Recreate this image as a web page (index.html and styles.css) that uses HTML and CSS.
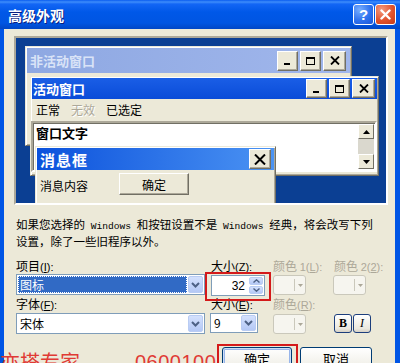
FILE: index.html
```html
<!DOCTYPE html>
<html lang="zh-CN">
<head>
<meta charset="utf-8">
<title>高级外观</title>
<link rel="stylesheet" href="styles.css">
</head>
<body>
<div class="win">
  <div class="titlebar">
    <span class="title">高级外观</span>
    <div class="tbtns">
      <span class="tb help">?</span>
      <span class="tb close"><svg width="11" height="11" viewBox="0 0 11 11"><path d="M1.5 1.5l8 8M9.5 1.5l-8 8" stroke="#fff" stroke-width="2.4" stroke-linecap="round"/></svg></span>
    </div>
  </div>
  <div class="frame">
    <div class="body">
      <div class="preview">
        <div class="pw inactive">
          <div class="ptitle">
            <span class="ptext">非活动窗口</span>
            <div class="pbtns">
              <span class="pb"><svg width="10" height="10" viewBox="0 0 10 10"><rect x="1" y="7" width="6" height="2" fill="#000"/></svg></span>
              <span class="pb"><svg width="11" height="10" viewBox="0 0 11 10"><rect x="1.5" y="1.5" width="8" height="7" fill="none" stroke="#000"/><rect x="1" y="1" width="9" height="2" fill="#000"/></svg></span>
              <span class="pb wide"><svg width="10" height="9" viewBox="0 0 10 9"><path d="M1 0.5l8 8M9 0.5l-8 8" stroke="#000" stroke-width="1.8"/></svg></span>
            </div>
          </div>
        </div>
        <div class="pw active">
          <div class="ptitle">
            <span class="ptext">活动窗口</span>
            <div class="pbtns">
              <span class="pb"><svg width="10" height="10" viewBox="0 0 10 10"><rect x="1" y="7" width="6" height="2" fill="#000"/></svg></span>
              <span class="pb"><svg width="11" height="10" viewBox="0 0 11 10"><rect x="1.5" y="1.5" width="8" height="7" fill="none" stroke="#000"/><rect x="1" y="1" width="9" height="2" fill="#000"/></svg></span>
              <span class="pb wide"><svg width="10" height="9" viewBox="0 0 10 9"><path d="M1 0.5l8 8M9 0.5l-8 8" stroke="#000" stroke-width="1.8"/></svg></span>
            </div>
          </div>
          <div class="menubar">
            <span>正常</span><span class="dis">无效</span><span>已选定</span>
          </div>
          <div class="textarea">
            <span class="wtext">窗口文字</span>
            <div class="sbar">
              <span class="sbtn"><svg width="7" height="4" viewBox="0 0 7 4"><path d="M3.5 0L7 4H0z" fill="#000"/></svg></span>
              <span class="strack"></span>
              <span class="sbtn"><svg width="7" height="4" viewBox="0 0 7 4"><path d="M0 0h7L3.5 4z" fill="#000"/></svg></span>
            </div>
          </div>
        </div>
        <div class="pw msg">
          <div class="ptitle">
            <span class="ptext">消息框</span>
            <span class="pb wide"><svg width="12" height="11" viewBox="0 0 12 11"><path d="M1 0.5l10 10M11 0.5l-10 10" stroke="#000" stroke-width="2"/></svg></span>
          </div>
          <div class="msgbody">
            <span>消息内容</span>
            <span class="mbtn">确定</span>
          </div>
        </div>
      </div>

      <p class="note">如果您选择的<span class="lat"> Windows </span>和按钮设置不是<span class="lat"> Windows </span>经典，将会改写下列<br>设置，除了一些旧程序以外。</p>

      <div class="form">
        <span class="lbl">项目<span class="acc">(<u>I</u>):</span></span>
        <span class="lbl">大小<span class="acc">(<u>Z</u>):</span></span>
        <span class="lbl dis">颜色 <span class="acc">1(<u>L</u>):</span></span>
        <span class="lbl dis">颜色 <span class="acc">2(<u>2</u>):</span></span>

        <div class="combo">
          <span class="val sel">图标</span>
          <span class="dd"><svg width="9" height="6" viewBox="0 0 9 6"><path d="M1 1l3.5 3.5L8 1" fill="none" stroke="#4D6185" stroke-width="2"/></svg></span>
        </div>
        <div class="spin hl">
          <span class="val num">32</span>
          <span class="spinbtns">
            <span class="sp"><svg width="7" height="4" viewBox="0 0 7 4"><path d="M0.5 3.5L3.5 0.8 6.5 3.5" fill="none" stroke="#4D6185" stroke-width="1.4"/></svg></span>
            <span class="sp"><svg width="7" height="4" viewBox="0 0 7 4"><path d="M0.5 0.5L3.5 3.2 6.5 0.5" fill="none" stroke="#4D6185" stroke-width="1.4"/></svg></span>
          </span>
        </div>
        <div class="cbtn"><span class="sw"></span><span class="cdd"><svg width="5" height="3" viewBox="0 0 5 3"><path d="M0 0h5L2.5 3z" fill="#ACA899"/></svg></span></div>
        <div class="cbtn c2"><span class="sw"></span><span class="cdd"><svg width="5" height="3" viewBox="0 0 5 3"><path d="M0 0h5L2.5 3z" fill="#ACA899"/></svg></span></div>

        <span class="lbl">字体<span class="acc">(<u>F</u>):</span></span>
        <span class="lbl">大小<span class="acc">(<u>E</u>):</span></span>
        <span class="lbl dis">颜色<span class="acc">(<u>R</u>):</span></span>
        <span></span>

        <div class="combo">
          <span class="val">宋体</span>
          <span class="dd"><svg width="9" height="6" viewBox="0 0 9 6"><path d="M1 1l3.5 3.5L8 1" fill="none" stroke="#4D6185" stroke-width="2"/></svg></span>
        </div>
        <div class="combo small">
          <span class="val">9</span>
          <span class="dd"><svg width="9" height="6" viewBox="0 0 9 6"><path d="M1 1l3.5 3.5L8 1" fill="none" stroke="#4D6185" stroke-width="2"/></svg></span>
        </div>
        <div class="cbtn"><span class="sw"></span><span class="cdd"><svg width="5" height="3" viewBox="0 0 5 3"><path d="M0 0h5L2.5 3z" fill="#ACA899"/></svg></span></div>
        <div class="fmt">
          <span class="fb bold">B</span>
          <span class="fb ital">I</span>
        </div>
      </div>

      <div class="footer">
        <span class="btn def hl2">确定</span>
        <span class="btn">取消</span>
      </div>
    </div>
  </div>
  <div class="watermark"><span>亦搭专家</span><span class="wm2">0600100</span></div>
</div>
</body>
</html>
```

FILE: styles.css
```css
* { box-sizing: border-box; margin: 0; padding: 0; }
html, body { width: 400px; height: 363px; overflow: hidden; }
body {
  font-family: "Noto Sans CJK SC", "Noto Sans", sans-serif;
  font-size: 12px;
  color: #000;
  background: #ECE9D8;
}
.win {
  position: relative;
  width: 400px;
  height: 363px;
  display: flex;
  flex-direction: column;
  overflow: hidden;
}
.titlebar {
  flex: none;
  height: 29px;
  display: flex;
  align-items: center;
  justify-content: space-between;
  padding: 0 4px 0 8px;
  background: linear-gradient(#0A5CF0 0, #3E8DFB 2px, #1366F5 4px, #0058E8 12px, #0055E2 23px, #0046C6 29px);
}
.title {
  color: #fff;
  font-weight: bold;
  font-size: 14px;
  letter-spacing: 0;
  text-shadow: 1px 1px #0A1F80;
}
.tbtns { display: flex; gap: 1px; }
.tb {
  width: 21px;
  height: 21px;
  border: 1px solid #fff;
  border-radius: 3px;
  display: flex;
  align-items: center;
  justify-content: center;
  color: #fff;
  font: bold 15px "Liberation Sans", sans-serif;
}
.help { background: radial-gradient(circle at 30% 25%, #78AEFF 0, #2F72EE 55%, #1B56D8 100%); }
.close { background: radial-gradient(circle at 30% 25%, #F49A7E 0, #E1532E 55%, #C63A16 100%); }

.frame {
  flex: 1;
  display: flex;
  background: #0055E5;
  padding: 0 5px 0 4px;
}
.body {
  flex: 1;
  background: #ECE9D8;
  position: relative;
}

/* preview canvas */
.preview {
  position: relative;
  margin: 7px 0 0 10px;
  width: 374px;
  height: 169px;
  border: 2px solid;
  border-color: #ACA899 #fff #fff #ACA899;
  background: #0B3F93;
  overflow: hidden;
}
.pw {
  position: absolute;
  background: #ECE9D8;
  border: 1px solid;
  border-color: #ECE9D8 #716F64 #716F64 #ECE9D8;
  padding: 1px;
  box-shadow: inset 1px 1px #fff, inset -1px -1px #ACA899;
  display: flex;
  flex-direction: column;
}
.inactive { left: 9px; top: 8px; width: 327px; height: 100px; }
.active { left: 14px; top: 38px; width: 349px; height: 100px; }
.msg { left: 19px; top: 108px; width: 241px; height: 70px; }

.ptitle {
  flex: none;
  display: flex;
  align-items: center;
  justify-content: space-between;
  color: #fff;
  font-weight: bold;
  font-size: 13px;
}
.inactive .ptitle {
  height: 25px;
  padding: 0 4px 0 3px;
  background: linear-gradient(90deg, #8EA8E2, #A1B7EC);
  color: #D9E3F7;
}
.active .ptitle {
  height: 21px;
  padding: 0 2px 0 1px;
  background: linear-gradient(#1A5EE6, #0A4CD8);
}
.msg .ptitle {
  height: 22px;
  padding: 0 3px 0 3px;
  background: linear-gradient(90deg, #0C52DC, #4B93F3);
  font-size: 15px;
  letter-spacing: 1px;
}
.pbtns { display: flex; gap: 2px; }
.pb {
  width: 21px;
  height: 19px;
  background: #ECE9D8;
  border: 1px solid;
  border-color: #fff #716F64 #716F64 #fff;
  box-shadow: inset -1px -1px #ACA899;
  display: flex;
  align-items: center;
  justify-content: center;
}
.inactive .pb { height: 20px; }
.pb.wide { width: 23px; }
.msg .pb { width: 22px; height: 20px; }

.menubar {
  height: 21px;
  display: flex;
  align-items: center;
  gap: 11px;
  padding-left: 4px;
}
.dis { color: #ACA899; }
.menubar .dis { text-shadow: 1px 1px #fff; }
.textarea {
  margin: 1px 0 0 -1px;
  height: 51px;
  background: #fff;
  border: 2px solid;
  border-color: #ACA899 #fff #fff #ACA899;
  box-shadow: inset 1px 1px #716F64;
  display: flex;
  justify-content: space-between;
  padding: 1px 1px 1px 3px;
}
.wtext { font-weight: bold; font-size: 13px; line-height: 16px; margin-top: 1px; }
.sbar { width: 16px; display: flex; flex-direction: column; }
.sbtn {
  height: 15px;
  background: #ECE9D8;
  border: 1px solid;
  border-color: #fff #716F64 #716F64 #fff;
  display: flex;
  align-items: center;
  justify-content: center;
}
.strack { flex: 1; background: #DAD8CE; }

.msgbody {
  flex: 1;
  display: flex;
  align-items: flex-start;
  gap: 31px;
  padding: 3px 0 0 3px;
}
.msgbody > span:first-child { margin-top: 4px; }
.mbtn {
  width: 70px;
  height: 22px;
  display: flex;
  align-items: center;
  justify-content: center;
  border: 1px solid;
  border-color: #fff #716F64 #716F64 #fff;
  box-shadow: inset -1px -1px #ACA899;
}

/* note */
.note {
  margin: 12px 0 0 12px;
  font-size: 11.5px;
  line-height: 15px;
  white-space: nowrap;
}
.lat { font-family: "Liberation Mono", monospace; font-size: 9.6px; }

/* form grid */
.form {
  margin: 8px 0 0 12px;
  display: grid;
  grid-template-columns: 189px 56px 55px 40px;
  grid-template-rows: 17px 21px 18px 20px;
  column-gap: 6px;
}
.lbl { white-space: nowrap; line-height: 17px; font-size: 12px; }
.acc { font-family: "Liberation Sans", sans-serif; font-size: 11px; }
.lbl.dis { color: #ACA899; }

.combo, .spin {
  display: flex;
  height: 21px;
  background: #fff;
  border: 1px solid #7F9DB9;
  padding: 1px;
}
.combo.small { width: 48px; margin-left: -1px; height: 20px; }
.combo .val, .spin .val {
  flex: 1;
  display: flex;
  align-items: center;
  padding-left: 2px;
  line-height: 1;
}
.val.sel {
  background: #316AC5;
  color: #fff;
  outline: 1px dotted #fff;
  outline-offset: -1px;
  margin-right: 1px;
}
.dd {
  width: 15px;
  border: 1px solid #B9CCF3;
  border-radius: 2px;
  background: linear-gradient(#D4E1FD, #B4C8F5);
  display: flex;
  align-items: center;
  justify-content: center;
}
.spin { width: 54px; position: relative; margin-top: 1px; height: 21px; }
.spin .num { justify-content: flex-end; padding-right: 4px; font-family: "Liberation Sans", sans-serif; font-size: 12px; }
.spinbtns { width: 14px; display: flex; flex-direction: column; gap: 1px; }
.sp {
  flex: 1;
  border: 1px solid #B9CCF3;
  border-radius: 2px;
  background: linear-gradient(#D4E1FD, #B4C8F5);
  display: flex;
  align-items: center;
  justify-content: center;
}
.hl::after {
  content: "";
  position: absolute;
  left: -7px;
  right: -7px;
  top: -4px;
  bottom: -6px;
  border: 2px solid #D41A1A;
}
.cbtn {
  width: 33px;
  height: 20px;
  margin-top: 1px;
  border: 1px solid #CAC8BB;
  border-radius: 3px;
  background: #F6F5EF;
  display: flex;
  align-items: center;
  padding: 2px;
}
.cbtn.c2 { margin-left: -1px; }
.sw { flex: 1; height: 100%; }
.cdd {
  width: 9px;
  height: 12px;
  border-left: 1px solid #CAC8BB;
  display: flex;
  align-items: center;
  justify-content: flex-end;
}
.fmt { display: flex; gap: 1px; margin-top: 1px; }
.fb {
  width: 18px;
  height: 19px;
  border: 1px solid #1C3E7C;
  border-radius: 3px;
  background: linear-gradient(#FFFFFF, #EAE8DE 80%, #D6D0C5);
  display: flex;
  align-items: center;
  justify-content: center;
  font-family: "Liberation Serif", serif;
  font-size: 12px;
}
.fb.bold { font-weight: bold; }
.fb.ital { font-style: italic; }

/* footer */
.footer {
  margin-top: 14px;
  display: flex;
  justify-content: flex-end;
  gap: 8px;
  padding-right: 23px;
}
.btn {
  position: relative;
  height: 23px;
  width: 72px;
  border: 1px solid #003C74;
  border-radius: 3px;
  background: linear-gradient(#FFFFFF, #F3F2EC 70%, #D6D0C5);
  display: flex;
  align-items: center;
  justify-content: center;
  font-size: 13px;
}
.btn.def { width: 70px; box-shadow: inset 0 0 0 1px #CEDDF6, inset 0 0 0 2px #98B5EA; }
.hl2::after {
  content: "";
  position: absolute;
  left: -6px;
  right: -7px;
  top: -4px;
  bottom: -8px;
  border: 2px solid #D41A1A;
}

.watermark {
  position: absolute;
  left: 0;
  top: 350px;
  color: #E03A34;
  font-size: 20px;
  line-height: 24px;
  white-space: nowrap;
  display: flex;
  gap: 55px;
}
.wm2 { font-family: "Liberation Sans", sans-serif; font-size: 20px; letter-spacing: 0.5px; }
```
